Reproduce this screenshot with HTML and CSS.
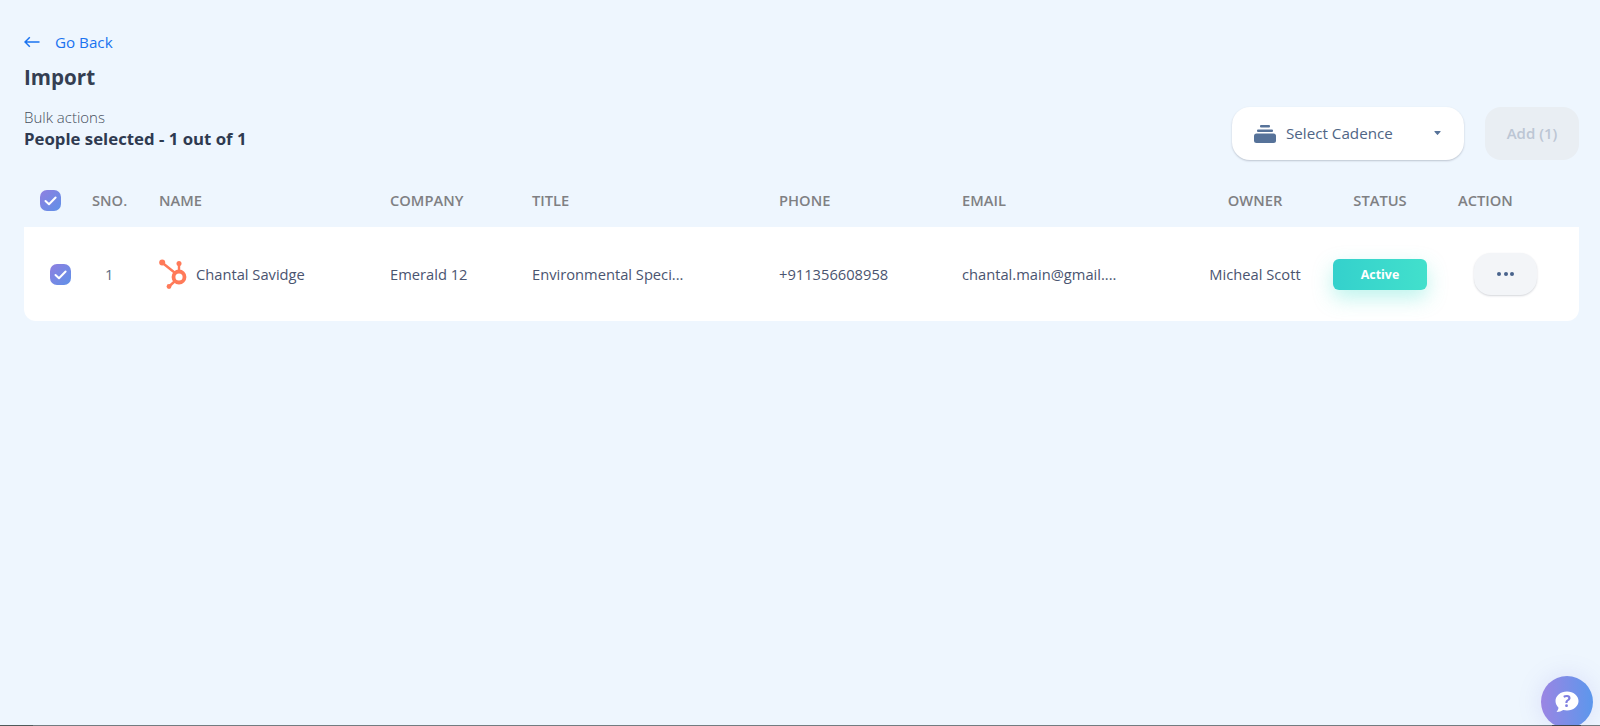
FILE: index.html
```html
<!DOCTYPE html>
<html lang="en">
<head>
<meta charset="utf-8">
<title>Import</title>
<link rel="stylesheet" href="styles.css">
</head>
<body>
<main class="page">
  <a class="back" href="#">
    <svg class="back-icon" viewBox="0 0 16 12" width="16" height="12"><path d="M15.500 6H1M5.800 1.200 1 6l4.800 4.800" fill="none" stroke="#1a73f0" stroke-width="1.500"/></svg>
    <span>Go Back</span>
  </a>
  <h1 class="title">Import</h1>
  <section class="bulk">
    <div class="bulk-text">
      <div class="bulk-label">Bulk actions</div>
      <div class="bulk-count">People selected - 1 out of 1</div>
    </div>
    <div class="bulk-actions">
      <button class="select">
        <svg class="select-icon" viewBox="0 0 22 18" width="22" height="18"><rect x="6" y="0" width="10" height="2.400" rx="1" fill="#567299"/><rect x="3" y="4.500" width="16" height="2.600" rx="1" fill="#567299"/><rect x="0" y="8.500" width="22" height="9.500" rx="2.500" fill="#567299"/></svg>
        <span class="select-label">Select Cadence</span>
        <svg class="caret" viewBox="0 0 8 5" width="7" height="4"><path d="M.6 0h6.800a.5.5 0 0 1 .4.8L4.400 4.700a.5.5 0 0 1-.8 0L.2.800A.5.5 0 0 1 .6 0z" fill="#567299"/></svg>
      </button>
      <button class="add">Add (1)</button>
    </div>
  </section>
  <div class="grid head">
    <div class="head-check"><span class="check"><svg viewBox="0 0 21 21" width="21" height="21"><path d="m5.500 11 3.500 3.300 6.600-6.800" fill="none" stroke="#fff" stroke-width="2" stroke-linecap="round" stroke-linejoin="round"/></svg></span></div>
    <div>SNO.</div>
    <div>NAME</div>
    <div>COMPANY</div>
    <div>TITLE</div>
    <div>PHONE</div>
    <div>EMAIL</div>
    <div class="center">OWNER</div>
    <div class="center">STATUS</div>
    <div class="action-head">ACTION</div>
  </div>
  <div class="grid row">
    <div class="row-check"><span class="check"><svg viewBox="0 0 21 21" width="21" height="21"><path d="m5.500 11 3.500 3.300 6.600-6.800" fill="none" stroke="#fff" stroke-width="2" stroke-linecap="round" stroke-linejoin="round"/></svg></span></div>
    <div class="sno">1</div>
    <div class="name">
      <svg viewBox="0 0 30 30" width="30" height="30"><g fill="none" stroke="#ff7a59"><circle cx="20" cy="18" r="5.500" stroke-width="3.800"/><path stroke-width="2.400" d="M3 3.500 15.500 13.500M20 5v7M15.500 22.500l-5.500 5"/></g><g fill="#ff7a59"><circle cx="3.200" cy="3.500" r="3"/><circle cx="20" cy="4.500" r="2.500"/><circle cx="10" cy="27.500" r="2.400"/></g></svg>
      <span>Chantal Savidge</span>
    </div>
    <div>Emerald 12</div>
    <div>Environmental Speci...</div>
    <div>+911356608958</div>
    <div class="email">chantal.main@gmail....</div>
    <div class="center">Micheal Scott</div>
    <div class="center"><span class="badge">Active</span></div>
    <div class="action-cell"><button class="more"><i></i><i></i><i></i></button></div>
  </div>
</main>
<button class="help" aria-label="Help">
  <svg viewBox="0 0 26 24" width="26" height="24"><path d="M13 1.500c6.300 0 11.500 4.200 11.500 9.500S19.300 20.500 13 20.500c-1.300 0-2.600-.2-3.800-.5-1.800 1.300-4 2-6.700 2 1-1.200 1.800-2.600 2-4.300C2.900 16 1.500 13.600 1.500 11 1.500 5.700 6.700 1.500 13 1.500z" fill="#fff"/><text x="13" y="16.500" class="help-mark">?</text></svg>
</button>
<div class="edge"></div>
</body>
</html>
```
FILE: styles.css
```css
* { box-sizing: border-box; }
html, body { height: 100%; }
body {
  margin: 0;
  background: #eef6fe;
  font-family: "Open Sans", "Noto Sans", sans-serif;
  color: #3d4a66;
  overflow: hidden;
}
.page { padding: 32px 21px 0 24px; }
.back {
  display: flex;
  align-items: center;
  gap: 15px;
  height: 20px;
  color: #1a73f0;
  font-size: 15.200px;
  text-decoration: none;
}
.title {
  margin: 12px 0 0;
  font-size: 20.600px;
  line-height: 27px;
  font-weight: 700;
  color: #343e52;
}
.bulk {
  display: flex;
  justify-content: space-between;
  align-items: flex-start;
  margin-top: 16px;
}
.bulk-label { font-size: 15px; line-height: 20px; color: #454d5b; font-weight: 300; }
.bulk-count { font-size: 16.800px; line-height: 23px; font-weight: 700; color: #2e3a50; }
.bulk-actions { display: flex; gap: 21px; }
.select {
  display: flex;
  align-items: center;
  width: 232px;
  height: 53px;
  padding: 0 23px 0 22px;
  border: 0;
  border-radius: 18px;
  background: #fff;
  box-shadow: 0 1px 2px rgba(60, 70, 90, .28);
  font: inherit;
}
.select-icon { flex: none; }
.select-label { margin: 0 0 2px 10px; font-size: 15.200px; color: #4f6585; flex: 1; text-align: left; }
.caret { margin-bottom: 2px; }
.add {
  width: 94px;
  height: 53px;
  padding: 0 0 2px;
  border: 0;
  border-radius: 16px;
  background: #e9eef3;
  color: #bcc6d4;
  font: 600 15px "Open Sans", sans-serif;
}
.grid {
  display: grid;
  grid-template-columns: 68px 67px 231px 142px 247px 183px 238px 110px 140px 129px;
  align-items: center;
}
.head {
  height: 54px;
  margin-top: 13px;
  font-size: 14.700px;
  font-weight: 600;
  color: #7f8083;
}
.row {
  height: 94px;
  background: #fff;
  border-radius: 0 0 12px 12px;
  font-size: 14.700px;
  color: #4a5470;
}
.center { text-align: center; justify-self: center; }
.action-head { padding-left: 8px; }
.action-cell { padding-left: 24px; }
.head-check { padding-left: 16px; display: flex; }
.row-check { padding-left: 26px; display: flex; }
.check {
  display: block;
  width: 21px;
  height: 21px;
  border-radius: 7px;
  background: linear-gradient(135deg, #8f7fe0, #5f91e8);
}
.check svg { display: block; }
.sno { padding-left: 13px; color: #5b6b85; }
.name { display: flex; align-items: center; gap: 7px; }
.name svg { flex: none; }
.badge {
  display: block;
  width: 94px;
  height: 31px;
  line-height: 31px;
  border-radius: 6px;
  background: linear-gradient(90deg, #34d1cc, #42e0cc);
  box-shadow: 0 8px 20px rgba(66, 224, 204, .35);
  color: #fff;
  font-size: 12.400px;
  font-weight: 700;
}
.more {
  display: flex;
  justify-content: center;
  align-items: center;
  gap: 2.500px;
  width: 63px;
  height: 42px;
  border: 0;
  border-radius: 17px;
  background: #f3f5f8;
  box-shadow: 0 1px 2px rgba(60, 70, 90, .22);
}
.more i { width: 4px; height: 4px; border-radius: 50%; background: #49638c; }
.help {
  position: fixed;
  right: 7px;
  top: 676px;
  width: 52px;
  height: 52px;
  border: 0;
  border-radius: 50%;
  padding: 0;
  display: flex;
  align-items: center;
  justify-content: center;
  background: linear-gradient(90deg, #9b85e3, #5c97ec);
  box-shadow: 0 0 24px rgba(130, 120, 230, .18);
}
.help-mark { font: 700 16px "Open Sans", sans-serif; fill: #7f7fe0; text-anchor: middle; }
.edge {
  position: fixed;
  left: 0;
  right: 0;
  bottom: 0;
  height: 1px;
  background: linear-gradient(90deg, #4f5a5a 33px, #737c80 33px, #737c80 1552px, #3f4650 1552px, #3f4650 1581px, #737c80 1581px);
}
```
